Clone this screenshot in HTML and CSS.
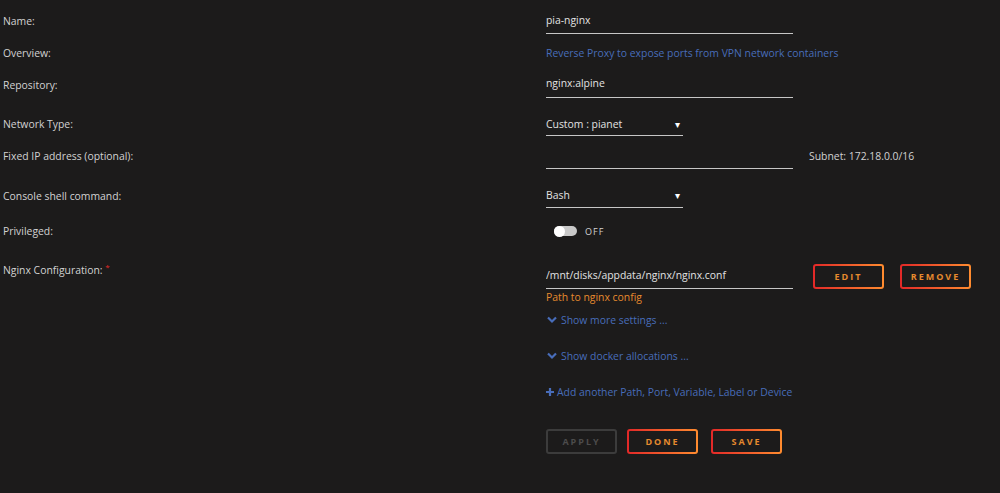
FILE: index.html
```html
<!DOCTYPE html>
<html lang="en">
<head>
  <meta charset="UTF-8">
  <title>Update Container</title>
  <link rel="stylesheet" href="styles.css">
</head>
<body>
  <form class="form">
    <div class="row r-name">
      <span class="label">Name:</span>
      <input class="field" type="text" value="pia-nginx">
    </div>
    <div class="row r-overview">
      <span class="label">Overview:</span>
      <span class="link">Reverse Proxy to expose ports from VPN network containers</span>
    </div>
    <div class="row r-repo">
      <span class="label">Repository:</span>
      <input class="field" type="text" value="nginx:alpine">
    </div>
    <div class="row r-net">
      <span class="label">Network Type:</span>
      <div class="select">Custom : pianet<span class="arrow">&#9662;</span></div>
    </div>
    <div class="row r-ip">
      <span class="label">Fixed IP address (optional):</span>
      <input class="field" type="text" value="">
      <span class="note">Subnet: 172.18.0.0/16</span>
    </div>
    <div class="row r-shell">
      <span class="label">Console shell command:</span>
      <div class="select">Bash<span class="arrow">&#9662;</span></div>
    </div>
    <div class="row r-priv">
      <span class="label">Privileged:</span>
      <span class="toggle"><span class="knob"></span></span>
      <span class="toggle-text">OFF</span>
    </div>
    <div class="row r-conf">
      <span class="label">Nginx Configuration: <sup class="req">*</sup></span>
      <div class="stack">
        <input class="field" type="text" value="/mnt/disks/appdata/nginx/nginx.conf">
        <span class="hint">Path to nginx config</span>
      </div>
      <button type="button" class="btn btn-edit">EDIT</button>
      <button type="button" class="btn btn-remove">REMOVE</button>
    </div>
    <div class="row r-more">
      <span class="label"></span>
      <span class="link"><svg class="icon" viewBox="0 0 10 8" width="10" height="8"><path d="M1 1.5 L5 5.5 L9 1.5" fill="none" stroke="#486dba" stroke-width="2.2"/></svg>Show more settings ...</span>
    </div>
    <div class="row r-alloc">
      <span class="label"></span>
      <span class="link"><svg class="icon" viewBox="0 0 10 8" width="10" height="8"><path d="M1 1.5 L5 5.5 L9 1.5" fill="none" stroke="#486dba" stroke-width="2.2"/></svg>Show docker allocations ...</span>
    </div>
    <div class="row r-add">
      <span class="label"></span>
      <span class="link"><svg class="icon plus" viewBox="0 0 8 8" width="8" height="8"><path d="M4 0 V8 M0 4 H8" stroke="#486dba" stroke-width="2.2"/></svg>Add another Path, Port, Variable, Label or Device</span>
    </div>
    <div class="row r-actions">
      <span class="label"></span>
      <button type="button" class="btn btn-disabled">APPLY</button>
      <button type="button" class="btn btn-done">DONE</button>
      <button type="button" class="btn btn-save">SAVE</button>
    </div>
  </form>
</body>
</html>
```

FILE: styles.css
```css
body {
  margin: 0;
  background-color: #1c1b1b;
  font-family: 'Open Sans', 'Noto Sans', sans-serif;
  font-size: 10.4px;
  color: #d2d2d2;
  height: 493px;
  overflow: hidden;
}

.form {
  padding-top: 8px;
}

.row {
  display: flex;
  align-items: center;
}

.label {
  width: 543px;
  padding-left: 3px;
  flex-shrink: 0;
  line-height: 14px;
}

.link {
  color: #486dba;
  display: flex;
  align-items: center;
  line-height: 14px;
}

.icon {
  margin-right: 4px;
  margin-left: 1px;
}

.icon.plus {
  margin-left: 0;
  margin-right: 3px;
}

.field {
  width: 247px;
  height: 26px;
  box-sizing: border-box;
  background: transparent;
  border: none;
  border-bottom: 1px solid #c6c6c6;
  color: #e2e2e2;
  font-family: inherit;
  font-size: 10.4px;
  padding: 0 0 2px 0;
  margin: 0;
  outline: none;
}

.select {
  width: 137px;
  height: 24px;
  box-sizing: border-box;
  border-bottom: 1px solid #c6c6c6;
  color: #e2e2e2;
  display: flex;
  align-items: center;
  justify-content: space-between;
  padding-right: 3px;
}

.arrow {
  font-size: 10px;
  color: #fff;
}

.note {
  margin-left: 16px;
  color: #d2d2d2;
}

/* row spacing */
.r-name { height: 26px; }
.r-overview { height: 18px; margin-top: 10px; }
.r-repo { height: 27px; margin-top: 9px; }
.r-net { height: 24px; margin-top: 14px; }
.r-ip { height: 26px; margin-top: 7px; }
.r-shell { height: 25px; margin-top: 14px; }
.r-priv { height: 18px; margin-top: 14px; }
.r-conf { margin-top: 23px; align-items: flex-start; }
.r-more { height: 14px; margin-top: 9px; }
.r-alloc { height: 14px; margin-top: 22px; }
.r-add { height: 14px; margin-top: 22px; }
.r-actions { margin-top: 30px; }

.req {
  color: #e22828;
  font-size: 8px;
  vertical-align: top;
  position: relative;
  top: -3px;
}

.stack {
  display: flex;
  flex-direction: column;
}

.hint {
  color: #e68a2e;
  line-height: 14px;
  margin-top: 1px;
}

.toggle {
  width: 23px;
  height: 10px;
  border-radius: 5px;
  background-color: #c9c9c9;
  margin-left: 8px;
  display: flex;
  align-items: center;
}

.knob {
  width: 11px;
  height: 11px;
  border-radius: 50%;
  background-color: #fff;
}

.toggle-text {
  margin-left: 8px;
  font-size: 9px;
  letter-spacing: 1px;
  color: #d2d2d2;
}

.btn {
  width: 71px;
  height: 25px;
  box-sizing: border-box;
  border: 2px solid transparent;
  border-radius: 3px;
  background: linear-gradient(#1c1b1b, #1c1b1b) padding-box,
              linear-gradient(90deg, #e22828, #ff8c2f) border-box;
  color: #e68a2e;
  font-family: inherit;
  font-size: 9px;
  font-weight: bold;
  letter-spacing: 2px;
  padding: 0;
  cursor: pointer;
}

.btn-edit {
  margin-left: 20px;
  margin-top: 1px;
}

.btn-remove {
  margin-left: 16px;
  margin-top: 1px;
}

.btn-disabled {
  background: #1c1b1b;
  border: 2px solid #3c3c3c;
  color: #4c4c4c;
}

.btn-done {
  margin-left: 10px;
}

.btn-save {
  margin-left: 13px;
}
```
